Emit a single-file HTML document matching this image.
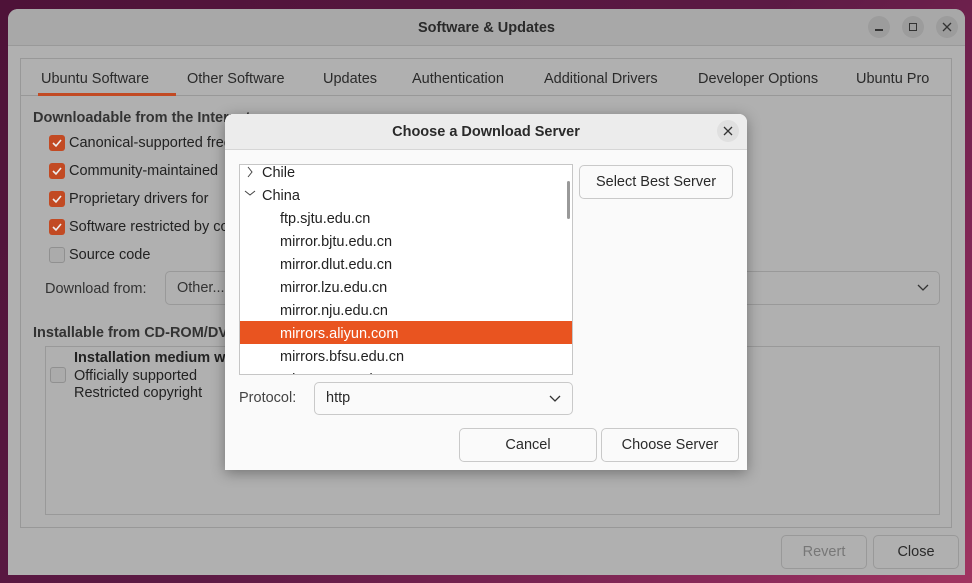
<!DOCTYPE html>
<html><head><style>
*{box-sizing:border-box;margin:0;padding:0}
body{width:972px;height:583px;overflow:hidden;position:relative;font-family:"Liberation Sans",sans-serif;font-size:14.5px;line-height:25px;color:#222;background:linear-gradient(135deg,#4e1238 0%,#5c1a44 50%,#8a2a5a 85%,#a03560 100%)}
.a{position:absolute}
.win{left:8px;top:9px;width:957px;height:566px;background:#b0b0b0;border-radius:10px 10px 0 0;overflow:hidden}
.tb{left:0;top:0;width:957px;height:37px;background:#a8a8a8;border-bottom:1px solid #999}
.cbtn{width:22px;height:22px;border-radius:50%;background:#9c9c9c;top:7px}
.frame{left:12px;top:49px;width:932px;height:470px;border:1px solid #989898}
.tabs{left:0;top:0;width:930px;height:37px;border-bottom:1px solid #989898}
.tab{top:8px;color:#2a2a2a}
.cb{width:16px;height:16px;border-radius:3px;background:#c24a23;left:41px}
.cb svg{position:absolute;left:2px;top:2px}
.cbe{width:16px;height:16px;border-radius:3px;border:1px solid #909090;background:#ababab}
.dlg{left:225px;top:114px;width:522px;height:356px;background:#fafafa;border-radius:8px 8px 0 0;box-shadow:0 3px 14px rgba(0,0,0,.35);overflow:hidden}
.dtb{left:0;top:0;width:522px;height:36px;background:#ececec;border-bottom:1px solid #d6d6d6}
.btn{border:1px solid #c9c9c9;border-radius:5px;background:#fafafa;text-align:center;color:#2a2a2a}
.list{left:14px;top:50px;width:334px;height:211px;border:1px solid #c6c6c6;background:#fff;overflow:hidden}
.it{position:absolute;left:40px;height:23px;line-height:26px;color:#222}
</style></head><body>
<div class="a win">
 <div class="a tb">
  <div class="a" style="left:0;width:957px;top:7px;text-align:center;font-weight:bold;color:#2a2a2a">Software &amp; Updates</div>
  <div class="a cbtn" style="left:860px"><div class="a" style="left:7px;top:13px;width:8px;height:1.5px;background:#333"></div></div>
  <div class="a cbtn" style="left:894px"><div class="a" style="left:7px;top:7px;width:8px;height:8px;border:1.3px solid #333"></div></div>
  <div class="a cbtn" style="left:928px"><svg class="a" style="left:6px;top:6px" width="10" height="10"><path d="M1 1L9 9M9 1L1 9" stroke="#333" stroke-width="1.3"/></svg></div>
 </div>
 <div class="a frame">
  <div class="a tabs">
   <div class="a tab" style="left:20px">Ubuntu Software</div>
   <div class="a" style="left:17px;top:34px;width:138px;height:3px;background:#c24a23"></div>
   <div class="a tab" style="left:166px">Other Software</div>
   <div class="a tab" style="left:302px">Updates</div>
   <div class="a tab" style="left:391px">Authentication</div>
   <div class="a tab" style="left:523px">Additional Drivers</div>
   <div class="a tab" style="left:677px">Developer Options</div>
   <div class="a tab" style="left:835px">Ubuntu Pro</div>
  </div>
 </div>
 <div class="a" style="left:25px;top:97px;font-weight:bold;color:#333">Downloadable from the Internet</div>
 <div class="a cb" style="left:41px;top:126px"><svg width="12" height="12"><path d="M2 6L5 9L10 3" stroke="#eee" stroke-width="1.6" fill="none"/></svg></div>
 <div class="a" style="left:61px;top:122px">Canonical-supported free</div>
 <div class="a cb" style="left:41px;top:154px"><svg width="12" height="12"><path d="M2 6L5 9L10 3" stroke="#eee" stroke-width="1.6" fill="none"/></svg></div>
 <div class="a" style="left:61px;top:150px">Community-maintained</div>
 <div class="a cb" style="left:41px;top:182px"><svg width="12" height="12"><path d="M2 6L5 9L10 3" stroke="#eee" stroke-width="1.6" fill="none"/></svg></div>
 <div class="a" style="left:61px;top:178px">Proprietary drivers for</div>
 <div class="a cb" style="left:41px;top:210px"><svg width="12" height="12"><path d="M2 6L5 9L10 3" stroke="#eee" stroke-width="1.6" fill="none"/></svg></div>
 <div class="a" style="left:61px;top:206px">Software restricted by copyright</div>
 <div class="a cbe" style="left:41px;top:238px"></div>
 <div class="a" style="left:61px;top:234px">Source code</div>
 <div class="a" style="left:37px;top:268px;color:#333">Download from:</div>
 <div class="a" style="left:157px;top:262px;width:775px;height:34px;border:1px solid #999;border-radius:5px"><div class="a" style="left:11px;top:4px;color:#333">Other...</div>
 <svg class="a" style="left:751px;top:12px" width="12" height="8"><path d="M1 1L6 6L11 1" stroke="#333" stroke-width="1.3" fill="none"/></svg></div>
 <div class="a" style="left:25px;top:312px;font-weight:bold;color:#333">Installable from CD-ROM/DVD</div>
 <div class="a" style="left:37px;top:337px;width:895px;height:169px;border:1px solid #999"></div>
 <div class="a cbe" style="left:42px;top:358px"></div>
 <div class="a" style="left:66px;top:337px;font-weight:bold">Installation medium with</div>
 <div class="a" style="left:66px;top:355px">Officially supported</div>
 <div class="a" style="left:66px;top:372px">Restricted copyright</div>
 <div class="a btn" style="left:773px;top:526px;width:86px;height:34px;line-height:33px;background:#b0b0b0;border-color:#999;color:#777">Revert</div>
 <div class="a btn" style="left:865px;top:526px;width:86px;height:34px;line-height:33px;background:#b0b0b0;border-color:#999">Close</div>
</div>

<div class="a dlg">
 <div class="a dtb">
  <div class="a" style="left:0;width:522px;top:6px;text-align:center;font-weight:bold;color:#2a2a2a">Choose a Download Server</div>
  <div class="a" style="left:492px;top:6px;width:22px;height:22px;border-radius:50%;background:#e0e0e0"><svg class="a" style="left:6px;top:6px" width="10" height="10"><path d="M1 1L9 9M9 1L1 9" stroke="#333" stroke-width="1.3"/></svg></div>
 </div>
 <div class="a list">
  <svg class="a" style="left:6px;top:1px" width="8" height="12"><path d="M2 1L6 6L2 11" stroke="#444" stroke-width="1" fill="none"/></svg>
  <div class="it" style="left:22px;top:-5px">Chile</div>
  <svg class="a" style="left:4px;top:24px" width="12" height="8"><path d="M1 2L6 6L11 2" stroke="#444" stroke-width="1" fill="none"/></svg>
  <div class="it" style="left:22px;top:18px">China</div>
  <div class="it" style="top:41px">ftp.sjtu.edu.cn</div>
  <div class="it" style="top:64px">mirror.bjtu.edu.cn</div>
  <div class="it" style="top:87px">mirror.dlut.edu.cn</div>
  <div class="it" style="top:110px">mirror.lzu.edu.cn</div>
  <div class="it" style="top:133px">mirror.nju.edu.cn</div>
  <div class="a" style="left:0;top:156px;width:332px;height:23px;background:#e95420"></div>
  <div class="it" style="top:156px;color:#fff">mirrors.aliyun.com</div>
  <div class="it" style="top:179px">mirrors.bfsu.edu.cn</div>
  <div class="it" style="top:202px">mirrors.cqu.edu.cn</div>
  <div class="a" style="left:327px;top:16px;width:3px;height:38px;background:#999;border-radius:2px"></div>
 </div>
 <div class="a btn" style="left:354px;top:51px;width:154px;height:34px;line-height:33px">Select Best Server</div>
 <div class="a" style="left:14px;top:272px;color:#444">Protocol:</div>
 <div class="a btn" style="left:89px;top:268px;width:259px;height:33px;text-align:left"><div class="a" style="left:11px;top:3px">http</div>
 <svg class="a" style="left:234px;top:12px" width="12" height="8"><path d="M1 1L6 6L11 1" stroke="#333" stroke-width="1.3" fill="none"/></svg></div>
 <div class="a btn" style="left:234px;top:314px;width:138px;height:34px;line-height:33px">Cancel</div>
 <div class="a btn" style="left:376px;top:314px;width:138px;height:34px;line-height:33px">Choose Server</div>
</div>
</body></html>
